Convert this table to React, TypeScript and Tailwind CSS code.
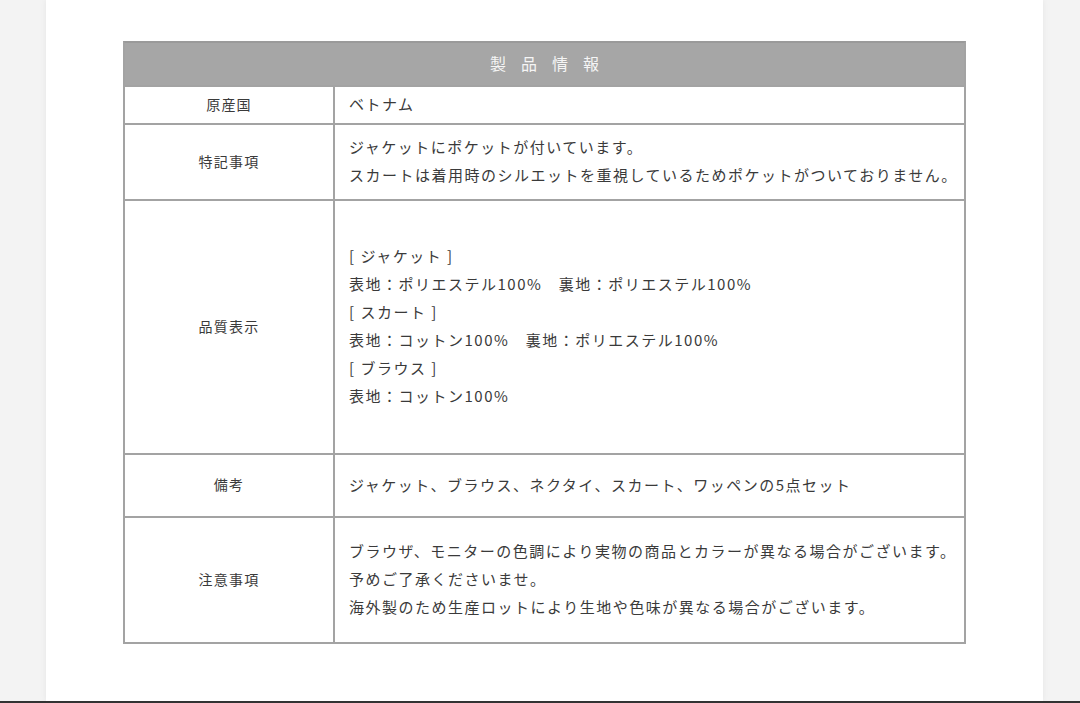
import React from "react";

const font = { fontFamily: '"Noto Sans CJK JP", "Noto Sans", sans-serif' };

function Row({ label, h, children }: { label: string; h: string; children: React.ReactNode }) {
  return (
    <div className={`flex border-t-2 border-[#a3a3a3] ${h}`}>
      <div className="w-[210px] shrink-0 border-r-2 border-[#a3a3a3] flex items-center justify-center text-[14px] text-[#3a3a3a] tracking-[1.2px] pb-[2px]">
        {label}
      </div>
      <div className="flex-1 flex flex-col justify-center pl-[14px] pb-[2px] text-[15px] leading-[28px] text-[#3a3a3a] tracking-[1.5px]">
        {children}
      </div>
    </div>
  );
}

export default function App() {
  return (
    <div className="w-[1080px] h-[703px] bg-[#f3f3f3] flex flex-col overflow-hidden" style={font}>
      <div className="flex-1 flex">
        <div className="ml-[46px] w-[997px] bg-white shadow-[0_0_6px_rgba(0,0,0,0.06)] pt-[41px] pl-[77px]">
          <div className="w-[843px] border-2 border-[#a3a3a3] border-t-[#9a9a9a]">
            <div className="h-[42px] bg-[#a6a6a6] flex items-center justify-center text-[16px] text-[#f5f5f5] tracking-[15px] pl-[15px] pb-[3px]">
              製品情報
            </div>
            <Row label="原産国" h="h-[38px]">
              <div>ベトナム</div>
            </Row>
            <Row label="特記事項" h="h-[76px]">
              <div>ジャケットにポケットが付いています。</div>
              <div>スカートは着用時のシルエットを重視しているためポケットがついておりません。</div>
            </Row>
            <Row label="品質表示" h="h-[254px]">
              <div>[ ジャケット ]</div>
              <div>表地：ポリエステル100%　裏地：ポリエステル100%</div>
              <div>[ スカート ]</div>
              <div>表地：コットン100%　裏地：ポリエステル100%</div>
              <div>[ ブラウス ]</div>
              <div>表地：コットン100%</div>
            </Row>
            <Row label="備考" h="h-[63px]">
              <div>ジャケット、ブラウス、ネクタイ、スカート、ワッペンの5点セット</div>
            </Row>
            <Row label="注意事項" h="h-[126px]">
              <div>ブラウザ、モニターの色調により実物の商品とカラーが異なる場合がございます。</div>
              <div>予めご了承くださいませ。</div>
              <div>海外製のため生産ロットにより生地や色味が異なる場合がございます。</div>
            </Row>
          </div>
        </div>
      </div>
      <div className="h-[2px] bg-[#333]" />
    </div>
  );
}
